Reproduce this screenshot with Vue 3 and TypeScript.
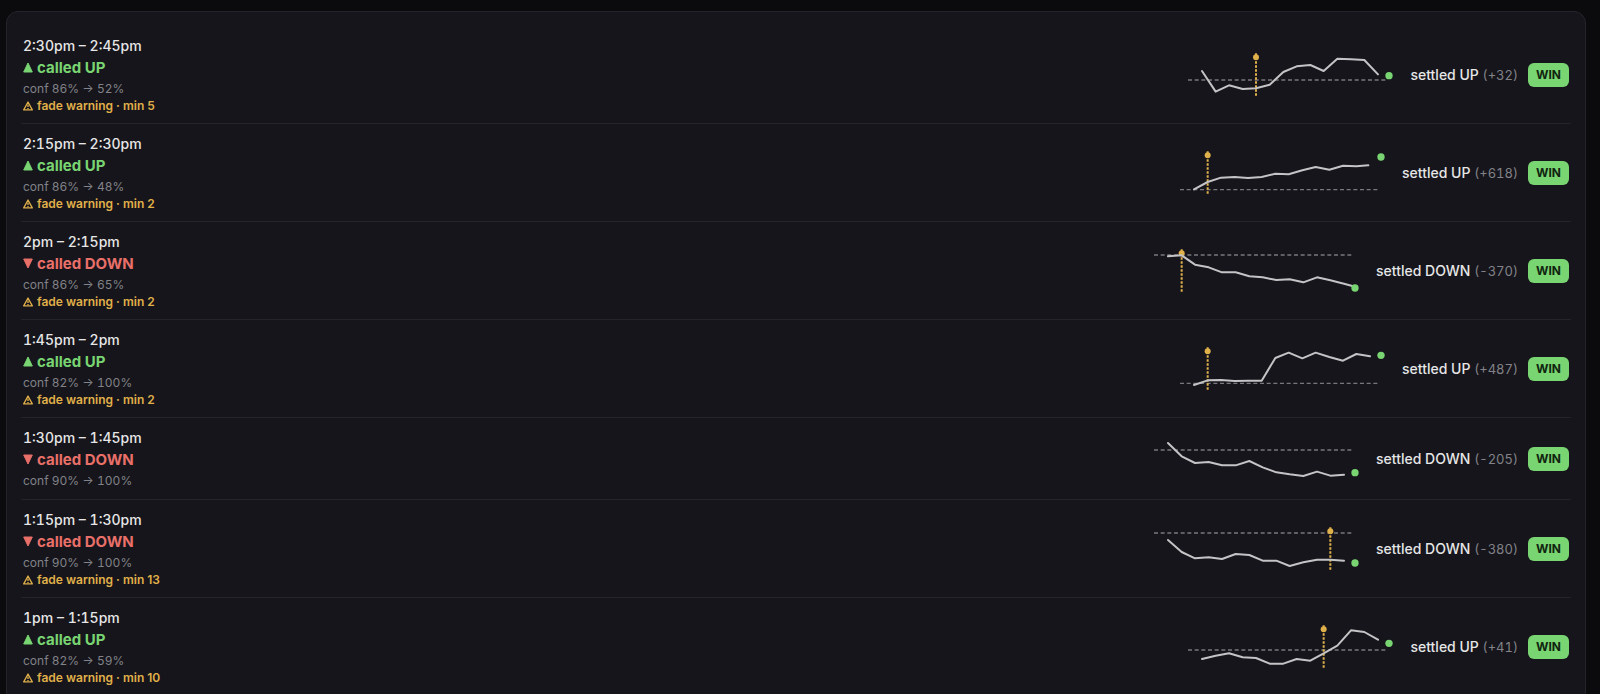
<script setup lang="ts">
type Direction = 'UP' | 'DOWN'

interface Call {
  window: string
  direction: Direction
  confidence: [number, number]
  fadeMinute?: number
  change: string
  baseline: number
  trail: number[]
  lastX?: number
  settle: number
  markerIndex?: number
}

const calls: Call[] = [
  { window: '2:30pm – 2:45pm', direction: 'UP', confidence: [86, 52], fadeMinute: 5, change: '+32', baseline: 87,
    trail: [60, 122, 103, 114, 112, 101, 63, 46, 42, 60, 23, 25, 27, 70], settle: 74, markerIndex: 4 },
  { window: '2:15pm – 2:30pm', direction: 'UP', confidence: [86, 48], fadeMinute: 2, change: '+618', baseline: 122,
    trail: [121, 99, 86, 84, 87, 84, 74, 76, 64, 54, 62, 50, 52, 49], lastX: 565, settle: 24, markerIndex: 1 },
  { window: '2pm – 2:15pm', direction: 'DOWN', confidence: [86, 65], fadeMinute: 2, change: '-370', baseline: 24,
    trail: [28, 25, 53, 61, 76, 76, 88, 91, 99, 97, 106, 91, 100, 110, 117], lastX: 595, settle: 123, markerIndex: 1 },
  { window: '1:45pm – 2pm', direction: 'UP', confidence: [82, 100], fadeMinute: 2, change: '+487', baseline: 115,
    trail: [120, 106, 105, 108, 107, 107, 39, 23, 40, 23, 36, 47, 27, 34], settle: 31, markerIndex: 1 },
  { window: '1:30pm – 1:45pm', direction: 'DOWN', confidence: [90, 100], change: '-205', baseline: 45,
    trail: [24, 64, 84, 81, 91, 91, 78, 97, 112, 118, 123, 110, 122, 119], settle: 113 },
  { window: '1:15pm – 1:30pm', direction: 'DOWN', confidence: [90, 100], fadeMinute: 13, change: '-380', baseline: 24,
    trail: [45, 81, 100, 97, 102, 87, 90, 107, 107, 123, 112, 104, 104, 107], settle: 114, markerIndex: 12 },
  { window: '1pm – 1:15pm', direction: 'UP', confidence: [82, 59], fadeMinute: 10, change: '+41', baseline: 81,
    trail: [108, 98, 91, 103, 105, 122, 122, 108, 113, 91, 68, 22, 27, 50], settle: 61, markerIndex: 9 },
]

const xAt = (index: number): number => Math.round(42 + index * 40.6)

function trailPoints(call: Call): string {
  const last = call.trail.length - 1
  return call.trail
    .map((y, i) => `${i === last && call.lastX ? call.lastX : xAt(i)},${y}`)
    .join(' ')
}
</script>

<template>
  <main class="page">
    <ul class="panel">
      <li v-for="call in calls" :key="call.window" class="row">
        <div class="info">
          <div class="window">{{ call.window }}</div>
          <div class="called" :class="call.direction === 'UP' ? 'up' : 'down'">
            <svg class="arrow" viewBox="0 0 10 12" aria-hidden="true">
              <path v-if="call.direction === 'UP'" d="M5 1 9.3 10H.7Z" />
              <path v-else d="M5 10 .7 1H9.3Z" />
            </svg>
            <span>called {{ call.direction }}</span>
          </div>
          <div class="confidence">conf {{ call.confidence[0] }}% → {{ call.confidence[1] }}%</div>
          <div v-if="call.fadeMinute" class="fade">
            <svg class="alert" viewBox="0 0 10 10" aria-hidden="true">
              <path d="M5 1 9.3 8.9H.7Z" />
              <path d="M5 3.6V6M5 6.9V7.9" />
            </svg>
            <span>fade warning · min {{ call.fadeMinute }}</span>
          </div>
        </div>
        <div class="result">
          <svg class="spark" viewBox="0 0 636 144" aria-hidden="true">
            <line class="baseline" x1="0" :y1="call.baseline" x2="600" :y2="call.baseline" />
            <template v-if="call.markerIndex !== undefined">
              <line class="marker" :x1="xAt(call.markerIndex)" y1="7" :x2="xAt(call.markerIndex)" y2="138" />
              <circle class="marker-dot" :cx="xAt(call.markerIndex)" cy="19" r="9" />
            </template>
            <polyline class="trail" :points="trailPoints(call)" />
            <circle class="settle" cx="603" :cy="call.settle" r="11" />
          </svg>
          <div class="settled">settled {{ call.direction }} <span class="change">({{ call.change }})</span></div>
          <span class="badge">WIN</span>
        </div>
      </li>
    </ul>
  </main>
</template>

<style>
body {
  margin: 0;
  background: #0b0b0d;
}
</style>

<style scoped>
.page {
  height: 100vh;
  box-sizing: border-box;
  padding: 11px 14px 0 6px;
  overflow: hidden;
  font-family: Inter, "Liberation Sans", sans-serif;
  color: #e6e6e6;
}
.panel {
  margin: 0;
  padding: 14px;
  list-style: none;
  background: #15151b;
  border: 1px solid #24242b;
  border-radius: 12px;
}
.row {
  display: flex;
  align-items: center;
  justify-content: space-between;
  padding: 9px 2px;
  border-bottom: 1px solid #24242b;
}
.info {
  display: flex;
  flex-direction: column;
}
.window,
.confidence,
.change {
  font-variant-numeric: tabular-nums;
}
.window {
  font-size: 14px;
  line-height: 22px;
  font-weight: 500;
}
.called {
  display: flex;
  align-items: center;
  gap: 4px;
  font-size: 15px;
  line-height: 22px;
  font-weight: 700;
}
.up {
  color: #79d472;
}
.down {
  color: #e96f69;
}
.arrow {
  width: 10px;
  height: 12px;
  fill: currentColor;
  stroke: currentColor;
  stroke-linejoin: round;
}
.confidence {
  font-size: 12px;
  line-height: 19px;
  color: #828288;
}
.fade {
  display: flex;
  align-items: center;
  gap: 4px;
  font-size: 12px;
  line-height: 16px;
  font-weight: 600;
  color: #e0b04a;
}
.alert {
  width: 10px;
  height: 10px;
  fill: none;
  stroke: currentColor;
  stroke-width: 1.3;
  stroke-linejoin: round;
}
.result {
  display: flex;
  align-items: center;
}
.spark {
  flex: none;
  width: 212px;
  height: 48px;
  margin-right: 10px;
  overflow: visible;
}
.baseline {
  stroke: #77777c;
  stroke-width: 4;
  stroke-dasharray: 12 8;
}
.marker {
  stroke: #e0b04a;
  stroke-width: 6;
  stroke-dasharray: 7 5;
}
.marker-dot {
  fill: #e0b04a;
}
.trail {
  fill: none;
  stroke: #c4c4c6;
  stroke-width: 6;
  stroke-linejoin: round;
  stroke-linecap: round;
}
.settle {
  fill: #79d472;
}
.settled {
  margin-right: 10px;
  font-size: 14px;
  line-height: 20px;
  font-weight: 500;
}
.change {
  font-size: 13px;
  font-weight: 400;
  color: #828288;
}
.badge {
  padding: 2px 8px;
  border-radius: 6px;
  background: #79d472;
  color: #10240f;
  font-size: 12px;
  line-height: 20px;
  font-weight: 700;
}
</style>
